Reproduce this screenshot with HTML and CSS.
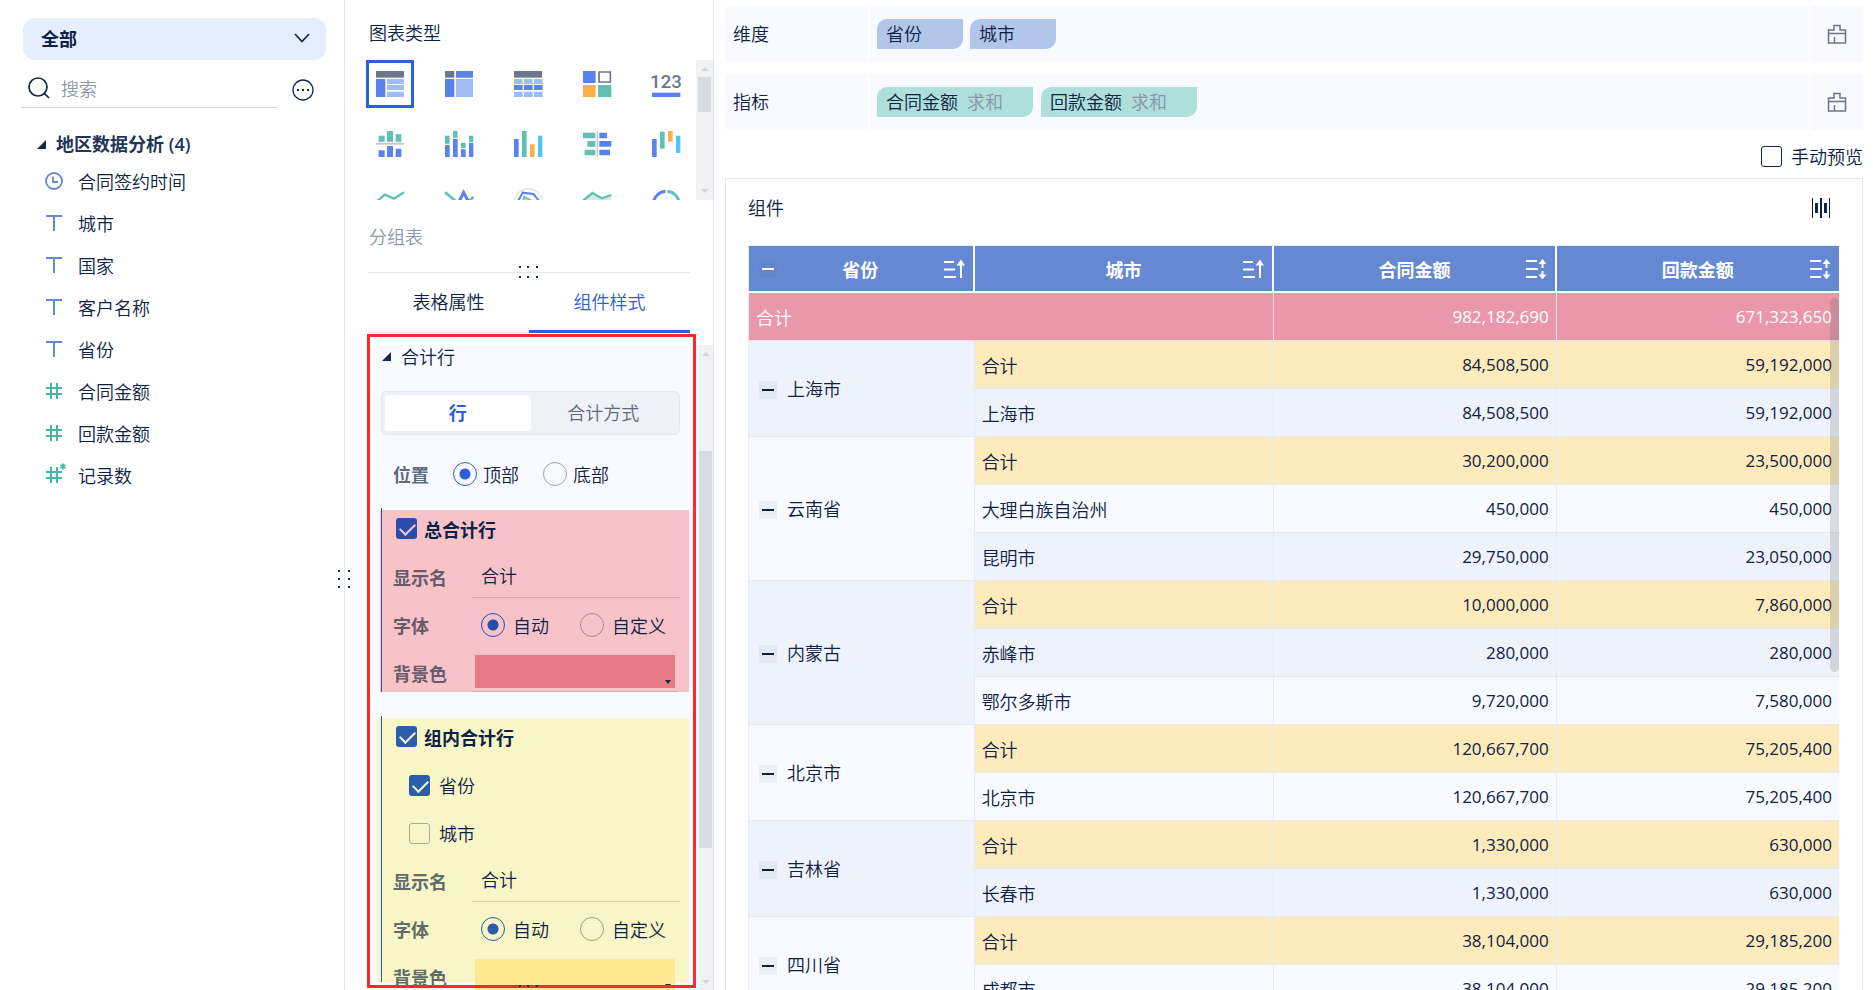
FILE: index.html
```
<!DOCTYPE html>
<html lang="zh-CN">
<head>
    <meta charset="UTF-8">
    <meta name="viewport" content="width=device-width, initial-scale=1.0">
    <title>组件</title>
    <link rel="stylesheet" href="styles.css">
</head>
<body>
    <!-- shared icons -->
    <svg class="sprite" aria-hidden="true">
        <symbol id="i-text" viewBox="0 0 18 18"><path d="M1 2H17M9 2V17" fill="none" stroke="#6488d2" stroke-width="2"/></symbol>
        <symbol id="i-num" viewBox="0 0 18 18"><path d="M1 6H17M1 12H17M6 1V17M12 1V17" fill="none" stroke="#43b8aa" stroke-width="2"/></symbol>
        <symbol id="i-brush" viewBox="0 0 20 20"><path d="M1.500 19V6H7V1.500H13V6H18.500V19ZM1.500 9.500H18.500M7.500 13V19" fill="none" stroke="#6b768c" stroke-width="1.500"/></symbol>
        <symbol id="i-asc" viewBox="0 0 21 20"><path d="M0 3H10M0 10.500H11M0 18H12M17 19V4" fill="none" stroke="#fff" stroke-width="2"/><path d="M12.500 6.500L17 0.500L21 6.500Z" fill="#fff"/></symbol>
        <symbol id="i-sort" viewBox="0 0 21 20"><path d="M0 2H11M0 10H12M0 18H11M16.500 4V9M16.500 12V17" fill="none" stroke="#fff" stroke-width="2"/><path d="M12.500 5L16.500 0L20.500 5ZM12.500 15.500L16.500 20.500L20.500 15.500Z" fill="#fff"/></symbol>
    </svg>

    <div class="app">
        <aside class="sidebar">
            <div class="dataset">
                <select aria-label="数据集"><option>全部</option></select>
                <svg width="16" height="10" viewBox="0 0 16 10"><path d="M1 1L8 8.500L15 1" fill="none" stroke="#13284b" stroke-width="1.800"/></svg>
            </div>
            <div class="search-row">
                <label class="search">
                    <svg width="22" height="22" viewBox="0 0 22 22"><circle cx="10" cy="10" r="9" fill="none" stroke="#13284b" stroke-width="1.700"/><path d="M16 16L21 21" stroke="#13284b" stroke-width="1.700"/></svg>
                    <input type="text" placeholder="搜索" aria-label="搜索">
                </label>
                <button type="button" class="icon-btn" aria-label="更多">
                    <svg width="22" height="22" viewBox="0 0 22 22"><circle cx="11" cy="11" r="10" fill="none" stroke="#13284b" stroke-width="1.300"/><path d="M5 10h2v2H5zM10 10h2v2h-2zM15 10h2v2h-2z" fill="#13284b"/></svg>
                </button>
            </div>
            <h2 class="group-title"><i class="tri"></i>地区数据分析 (4)</h2>
            <ul class="fields">
                <li><svg width="18" height="18" viewBox="0 0 18 18"><circle cx="9" cy="9" r="8" fill="none" stroke="#6488d2" stroke-width="1.800"/><path d="M8 4.500V10H13" fill="none" stroke="#6488d2" stroke-width="1.800"/></svg>合同签约时间</li>
                <li><svg width="18" height="18"><use href="#i-text"/></svg>城市</li>
                <li><svg width="18" height="18"><use href="#i-text"/></svg>国家</li>
                <li><svg width="18" height="18"><use href="#i-text"/></svg>客户名称</li>
                <li><svg width="18" height="18"><use href="#i-text"/></svg>省份</li>
                <li><svg width="18" height="18"><use href="#i-num"/></svg>合同金额</li>
                <li><svg width="18" height="18"><use href="#i-num"/></svg>回款金额</li>
                <li><svg class="over" width="18" height="18" viewBox="0 0 18 18"><path d="M1 6H17M1 12H17M6 1V17M12 1V17" fill="none" stroke="#43b8aa" stroke-width="2"/><path d="M14 -3h8v7h-8z" fill="#fff"/><path d="M18 -2.500V3.500M15.400 -1L20.600 2M15.400 2L20.600 -1" stroke="#43b8aa" stroke-width="1.700"/></svg>记录数</li>
            </ul>
            <svg class="grip-v" width="14" height="20" viewBox="0 0 14 20" aria-hidden="true"><path d="M0 0h2v2H0zM10 0h2v2h-2zM0 8h2v2H0zM10 8h2v2h-2zM0 16h2v2H0zM10 16h2v2h-2z" fill="#13284b"/></svg>
        </aside>

        <section class="config">
            <h2 class="config-title">图表类型</h2>
            <div class="chart-area">
                <div class="charts">
                    <button type="button" class="chart active" aria-label="分组表"><svg viewBox="0 0 84 78"><path d="M0 0h84v20H0z" fill="#6b768f"/><path d="M0 24h28v54H0z" fill="#5b82ec"/><path d="M33 24h51v15H33zM33 42h51v15H33zM33 62h51v16H33z" fill="#9fbcf4"/></svg></button>
                    <button type="button" class="chart" aria-label="交叉表"><svg viewBox="0 0 84 78"><path d="M0 0h28v20H0z" fill="#6b768f"/><path d="M33 0h51v20H33zM0 24h28v54H0z" fill="#5b82ec"/><path d="M33 24h51v54H33z" fill="#9fbcf4"/></svg></button>
                    <button type="button" class="chart" aria-label="明细表"><svg viewBox="0 0 84 78"><path d="M0 0h84v20H0z" fill="#6b768f"/><path d="M0 24h26v15H0zM30 24h26v15H30zM60 24h26v15H60zM0 62h26v16H0zM30 62h26v16H30zM60 62h26v16H60z" fill="#9fbcf4"/><path d="M0 42h26v15H0zM30 42h26v15H30zM60 42h26v15H60z" fill="#5b82ec"/></svg></button>
                    <button type="button" class="chart" aria-label="颜色表格"><svg viewBox="0 0 84 78"><path d="M0 0h38v36H0z" fill="#5b82ec"/><path d="M48 3h34v30H48z" fill="none" stroke="#6b768f" stroke-width="5"/><path d="M0 42h38v36H0z" fill="#fcb04a"/><path d="M45 42h40v36H45z" fill="#62bfb3"/></svg></button>
                    <button type="button" class="chart" aria-label="KPI指标卡"><svg viewBox="0 0 84 78"><text x="42" y="50" text-anchor="middle" font-family="Roboto" font-size="56" font-weight="500" fill="#6b768f">123</text><path d="M0 65h85v13H0z" fill="#5b82ec"/></svg></button>

                    <button type="button" class="chart" aria-label="对比柱状图"><svg viewBox="0 0 84 78"><path d="M8 14h18v18H8zM33 0h18v32H33zM59 10h17v22H59z" fill="#62bfb3"/><path d="M0 35h84v6H0z" fill="#c3c7ce"/><path d="M8 58h18v20H8zM33 45h18v33H33zM59 53h17v25H59z" fill="#5b82ec"/></svg></button>
                    <button type="button" class="chart" aria-label="堆积柱状图"><svg viewBox="0 0 84 78"><path d="M0 14h14v24H0zM24 0h14v20H24zM48 35h14v16H48zM72 14h13v20H72z" fill="#62bfb3"/><path d="M0 42h14v36H0zM24 24h14v54H24zM48 55h14v23H48zM72 36h13v42H72z" fill="#5b82ec"/></svg></button>
                    <button type="button" class="chart" aria-label="分区柱状图"><svg viewBox="0 0 84 78"><path d="M0 24h14v54H0z" fill="#5b82ec"/><path d="M24 0h14v78H24z" fill="#62bfb3"/><path d="M48 40h14v38H48z" fill="#fcb04a"/><path d="M72 14h13v64H72z" fill="#4fc6f7"/></svg></button>
                    <button type="button" class="chart" aria-label="对比条形图"><svg viewBox="0 0 84 78"><path d="M0 5h37v17H0zM13 30h24v17H13zM5 56h32v17H5z" fill="#62bfb3"/><path d="M41 0h4v78h-4z" fill="#c3c7ce"/><path d="M49 5h23v17H49zM49 30h36v17H49zM49 56h32v17H49z" fill="#5b82ec"/></svg></button>
                    <button type="button" class="chart" aria-label="瀑布图"><svg viewBox="0 0 84 78"><path d="M0 24h14v54H0z" fill="#5b82ec"/><path d="M24 2h14v51H24z" fill="#62bfb3"/><path d="M48 0h14v32H48z" fill="#fcb04a"/><path d="M72 14h13v52H72z" fill="#4fc6f7"/></svg></button>

                    <button type="button" class="chart" aria-label="折线图"><svg viewBox="0 0 84 78"><path d="M3 31L26 11L54 23L84 4" fill="none" stroke="#62bfb3" stroke-width="7"/></svg></button>
                    <button type="button" class="chart" aria-label="范围面积图"><svg viewBox="0 0 84 78"><path d="M0 4L34 32M68 32L86 18" fill="none" stroke="#62bfb3" stroke-width="8"/><path d="M42 32L56 4L70 32" fill="none" stroke="#5b82ec" stroke-width="9"/></svg></button>
                    <button type="button" class="chart" aria-label="雷达图"><svg viewBox="0 0 84 78"><circle cx="43" cy="38" r="44" fill="none" stroke="#dfe2e8" stroke-width="4"/><path d="M10 34L26 5L58 9L79 34" fill="none" stroke="#5b82ec" stroke-width="6"/><path d="M26 34L30 17L54 30" fill="#b5ddd9" stroke="#62bfb3" stroke-width="5"/></svg></button>
                    <button type="button" class="chart" aria-label="面积图"><svg viewBox="0 0 84 78"><path d="M0 30L28 5L56 22L85 12V40H0Z" fill="#d4ece9"/><path d="M0 29L28 6L56 22L85 12" fill="none" stroke="#62bfb3" stroke-width="7"/></svg></button>
                    <button type="button" class="chart" aria-label="饼图"><svg viewBox="0 0 84 78"><circle cx="43" cy="40" r="38" fill="#f6f7f9"/><path d="M4 36A40 40 0 0 1 40 1" fill="none" stroke="#5b82ec" stroke-width="9"/><path d="M46 1A40 40 0 0 1 82 36" fill="none" stroke="#62bfb3" stroke-width="9"/></svg></button>
                </div>
                <div class="scrollbar chart-scroll"><i class="arrow up"></i><span class="thumb"></span><i class="arrow down"></i></div>
            </div>
            <p class="chart-name">分组表</p>
            <div class="divider">
                <svg class="grip-h" width="20" height="12" viewBox="0 0 20 12" aria-hidden="true"><path d="M0 0h2v2H0zM8 0h2v2H8zM17 0h2v2h-2zM0 10h2v2H0zM8 10h2v2H8zM17 10h2v2h-2z" fill="#13284b"/></svg>
            </div>
            <nav class="tabs">
                <button type="button">表格属性</button>
                <button type="button" class="active">组件样式</button>
            </nav>

            <div class="style-area">
                <form class="style-form">
                    <h3 class="section-title"><i class="tri"></i>合计行</h3>
                    <div class="segment">
                        <button type="button" class="active">行</button>
                        <button type="button">合计方式</button>
                    </div>
                    <div class="row position">
                        <span class="name">位置</span>
                        <label class="opt"><input type="radio" name="pos" checked>顶部</label>
                        <label class="opt"><input type="radio" name="pos">底部</label>
                    </div>

                    <div class="block block-total">
                        <label class="row check strong"><input type="checkbox" checked>总合计行</label>
                        <div class="row">
                            <label class="name" for="totalName">显示名</label>
                            <input type="text" id="totalName" value="合计">
                        </div>
                        <div class="row">
                            <span class="name">字体</span>
                            <label class="opt"><input type="radio" name="font1" checked>自动</label>
                            <label class="opt"><input type="radio" name="font1">自定义</label>
                        </div>
                        <div class="row">
                            <span class="name">背景色</span>
                            <div class="color-box"><button type="button" class="color" aria-label="背景色"></button></div>
                        </div>
                    </div>

                    <div class="block block-group">
                        <label class="row check strong"><input type="checkbox" checked>组内合计行</label>
                        <label class="row check sub"><input type="checkbox" checked>省份</label>
                        <label class="row check sub"><input type="checkbox">城市</label>
                        <div class="row">
                            <label class="name" for="groupName">显示名</label>
                            <input type="text" id="groupName" value="合计">
                        </div>
                        <div class="row">
                            <span class="name">字体</span>
                            <label class="opt"><input type="radio" name="font2" checked>自动</label>
                            <label class="opt"><input type="radio" name="font2">自定义</label>
                        </div>
                        <div class="row">
                            <span class="name">背景色</span>
                            <div class="color-box"><button type="button" class="color" aria-label="背景色"></button></div>
                        </div>
                    </div>
                </form>
                <div class="scrollbar style-scroll"><i class="arrow up"></i><span class="thumb"></span><i class="arrow down"></i></div>
                <div class="highlight"></div>
                <svg class="grip-bottom" width="20" height="12" viewBox="0 0 20 12" aria-hidden="true"><path d="M0 0h2v2H0zM8 0h2v2H8zM17 0h2v2h-2z" fill="#13284b"/></svg>
            </div>
        </section>

        <main class="main">
            <div class="shelf">
                <div class="shelf-name">维度</div>
                <div class="shelf-items dims">
                    <span class="chip">省份</span>
                    <span class="chip">城市</span>
                </div>
                <button type="button" class="shelf-clear" aria-label="清空维度"><svg width="20" height="20"><use href="#i-brush"/></svg></button>
            </div>
            <div class="shelf">
                <div class="shelf-name">指标</div>
                <div class="shelf-items measures">
                    <span class="chip">合同金额 <em>求和</em></span>
                    <span class="chip">回款金额 <em>求和</em></span>
                </div>
                <button type="button" class="shelf-clear" aria-label="清空指标"><svg width="20" height="20"><use href="#i-brush"/></svg></button>
            </div>
            <label class="preview"><input type="checkbox">手动预览</label>

            <div class="card">
                <div class="card-head">
                    <h2>组件</h2>
                    <button type="button" class="icon-btn" aria-label="列宽">
                        <svg width="20" height="20" viewBox="0 0 20 20"><path d="M1 0h1v20H1zM4 5h3v10H4zM9 0h2v20H9zM13 5h3v10h-3zM18 0h1v20h-1z" fill="#0f2446"/></svg>
                    </button>
                </div>
                <div class="table-wrap">
                    <table>
                        <colgroup><col class="c-prov"><col class="c-city"><col><col></colgroup>
                        <thead>
                            <tr>
                                <th><div class="th"><button type="button" class="fold" aria-label="收起"></button><span>省份</span><svg width="21" height="20"><use href="#i-asc"/></svg></div></th>
                                <th><div class="th"><span>城市</span><svg width="21" height="20"><use href="#i-asc"/></svg></div></th>
                                <th><div class="th"><span>合同金额</span><svg width="21" height="20"><use href="#i-sort"/></svg></div></th>
                                <th><div class="th"><span>回款金额</span><svg width="21" height="20"><use href="#i-sort"/></svg></div></th>
                            </tr>
                        </thead>
                        <tbody>
                            <tr class="total"><td colspan="2">合计</td><td class="num">982,182,690</td><td class="num">671,323,650</td></tr>
                            <tr class="sub"><td class="prov odd" rowspan="2"><button type="button" class="fold" aria-label="收起"></button>上海市</td><td>合计</td><td class="num">84,508,500</td><td class="num">59,192,000</td></tr>
                            <tr class="odd"><td>上海市</td><td class="num">84,508,500</td><td class="num">59,192,000</td></tr>
                            <tr class="sub"><td class="prov" rowspan="3"><button type="button" class="fold" aria-label="收起"></button>云南省</td><td>合计</td><td class="num">30,200,000</td><td class="num">23,500,000</td></tr>
                            <tr><td>大理白族自治州</td><td class="num">450,000</td><td class="num">450,000</td></tr>
                            <tr class="odd"><td>昆明市</td><td class="num">29,750,000</td><td class="num">23,050,000</td></tr>
                            <tr class="sub"><td class="prov odd" rowspan="3"><button type="button" class="fold" aria-label="收起"></button>内蒙古</td><td>合计</td><td class="num">10,000,000</td><td class="num">7,860,000</td></tr>
                            <tr class="odd"><td>赤峰市</td><td class="num">280,000</td><td class="num">280,000</td></tr>
                            <tr><td>鄂尔多斯市</td><td class="num">9,720,000</td><td class="num">7,580,000</td></tr>
                            <tr class="sub"><td class="prov" rowspan="2"><button type="button" class="fold" aria-label="收起"></button>北京市</td><td>合计</td><td class="num">120,667,700</td><td class="num">75,205,400</td></tr>
                            <tr><td>北京市</td><td class="num">120,667,700</td><td class="num">75,205,400</td></tr>
                            <tr class="sub"><td class="prov odd" rowspan="2"><button type="button" class="fold" aria-label="收起"></button>吉林省</td><td>合计</td><td class="num">1,330,000</td><td class="num">630,000</td></tr>
                            <tr class="odd"><td>长春市</td><td class="num">1,330,000</td><td class="num">630,000</td></tr>
                            <tr class="sub"><td class="prov" rowspan="2"><button type="button" class="fold" aria-label="收起"></button>四川省</td><td>合计</td><td class="num">38,104,000</td><td class="num">29,185,200</td></tr>
                            <tr><td>成都市</td><td class="num">38,104,000</td><td class="num">29,185,200</td></tr>
                        </tbody>
                    </table>
                    <div class="table-thumb"></div>
                </div>
            </div>
        </main>
    </div>
</body>
</html>
```
FILE: styles.css
```
* {
    margin: 0;
    padding: 0;
    box-sizing: border-box;
}

body {
    font-family: "Noto Sans CJK SC", sans-serif;
    font-size: 18px;
    line-height: 24px;
    font-weight: 350;
    color: #0d2145;
    background: #fff;
    overflow: hidden;
}

button, input, select {
    font: inherit;
    color: inherit;
    border: none;
    background: none;
    outline: none;
}

button {
    cursor: pointer;
}

h2, h3 {
    font-size: 18px;
    font-weight: 350;
}

svg {
    display: block;
    flex-shrink: 0;
}

.sprite {
    position: absolute;
    width: 0;
    height: 0;
}

.app {
    display: flex;
    height: 100vh;
}

.tri {
    border-left: 9px solid transparent;
    border-bottom: 9px solid #13284b;
}

/* Radio and checkbox */
input[type="radio"] {
    appearance: none;
    flex-shrink: 0;
    width: 24px;
    height: 24px;
    border: 1px solid #9aa3b3;
    border-radius: 50%;
}

input[type="radio"]:checked {
    border-color: var(--accent, #2c60db);
    background: radial-gradient(circle, var(--accent, #2c60db) 5px, transparent 6px);
}

input[type="checkbox"] {
    appearance: none;
    flex-shrink: 0;
    width: 21px;
    height: 21px;
    border: 1px solid #13284b;
    border-radius: 3px;
    position: relative;
}

input[type="checkbox"]:checked {
    border: none;
    background: var(--accent);
}

input[type="checkbox"]:checked::after {
    content: "";
    position: absolute;
    left: 7px;
    top: 2px;
    width: 7px;
    height: 13px;
    border: solid var(--tick);
    border-width: 0 2px 2px 0;
    transform: rotate(45deg);
}

/* Sidebar */
.sidebar {
    position: relative;
    width: 345px;
    flex-shrink: 0;
    padding: 18px 18px 0 21px;
    border-right: 1px solid #e4e7f0;
}

.dataset {
    display: flex;
    align-items: center;
    height: 42px;
    margin-left: 2px;
    padding: 0 16px 2px 18px;
    border-radius: 12px;
    background: #e5eeff;
}

.dataset select {
    appearance: none;
    flex: 1;
    font-weight: 700;
}

.search-row {
    display: flex;
    justify-content: space-between;
    align-items: center;
    height: 48px;
    padding-right: 12px;
}

.search {
    display: flex;
    align-items: center;
    gap: 11px;
    width: 256px;
    height: 100%;
    padding: 9px 0 0 7px;
    border-bottom: 1px solid #d4d8e2;
}

.search input {
    width: 100%;
}

.search input::placeholder {
    color: #8e97a8;
}

.search-row .icon-btn {
    padding-top: 12px;
}

.group-title {
    display: flex;
    align-items: center;
    gap: 10px;
    height: 30px;
    margin-top: 21px;
    padding-left: 16px;
    font-family: "Open Sans", "Noto Sans CJK SC", sans-serif;
    font-weight: 600;
    color: #223556;
}

.fields {
    margin-top: 1px;
    list-style: none;
}

.fields li {
    display: flex;
    align-items: center;
    gap: 15px;
    height: 42px;
    padding-left: 24px;
}

.over {
    overflow: visible;
}

.grip-v {
    position: absolute;
    right: -8px;
    top: 570px;
}

/* Config panel */
.config {
    display: flex;
    flex-direction: column;
    width: 369px;
    flex-shrink: 0;
    padding-left: 21px;
    border-right: 1px solid #e4e7f0;
}

.config-title {
    padding: 20px 3px 16px;
}

.chart-area {
    display: flex;
    justify-content: space-between;
    height: 140px;
    overflow: hidden;
}

.charts {
    display: grid;
    grid-template-columns: repeat(5, 48px);
    grid-auto-rows: 48px;
    gap: 12px 21px;
}

.chart {
    display: flex;
    align-items: center;
    justify-content: center;
}

.chart.active {
    border: 3px solid #2c60db;
}

.chart svg {
    width: 28px;
    height: 26px;
    overflow: visible;
}

.scrollbar {
    display: flex;
    flex-direction: column;
    align-items: center;
    background: #f1f2f4;
}

.scrollbar .thumb {
    width: 13px;
    background: #d8dbe0;
}

.arrow {
    border: 4px solid transparent;
}

.arrow.up {
    border-top: none;
    border-bottom-color: #d3d6dc;
}

.arrow.down {
    border-bottom: none;
    border-top-color: #d3d6dc;
    margin-top: auto;
}

.chart-scroll {
    width: 17px;
    padding: 7px 0;
}

.chart-scroll .thumb {
    height: 35px;
    margin-top: 6px;
}

.chart-name {
    padding: 24px 3px;
    color: #8e97a8;
}

.divider {
    position: relative;
    margin: 0 23px 0 2px;
    border-top: 1px solid #e4e7f0;
}

.grip-h {
    position: absolute;
    left: 151px;
    top: -7px;
}

.tabs {
    display: flex;
    height: 60px;
    margin: 0 23px 0 2px;
    border-bottom: 1px solid #e4e7f0;
}

.tabs button {
    flex: 1;
    margin-bottom: -1px;
    padding-bottom: 1px;
    border-bottom: 3px solid transparent;
}

.tabs .active {
    color: #2c60db;
    border-color: #2c60db;
}

.style-area {
    position: relative;
    display: flex;
    flex: 1;
    min-height: 0;
    margin-top: 12px;
    margin-left: 1px;
}

.style-form {
    flex: 1;
    overflow: hidden;
    background: #f8faff;
}

.section-title {
    display: flex;
    align-items: center;
    gap: 10px;
    height: 22px;
    padding-left: 15px;
    line-height: 22px;
}

.segment {
    display: flex;
    height: 44px;
    margin: 24px 18px 0 14px;
    padding: 3px;
    border: 1px solid #e4e7ee;
    border-radius: 6px;
    background: #eef1f6;
}

.segment button {
    flex: 1;
    padding-bottom: 2px;
    color: #5d6a82;
}

.segment .active {
    border-radius: 4px;
    background: #fff;
    color: #2c60db;
    font-weight: 700;
}

.row {
    display: flex;
    align-items: center;
    height: 48px;
}

.name {
    width: 79px;
    font-weight: 600;
    color: var(--label, #5d6a82);
}

.opt {
    display: flex;
    align-items: center;
    gap: 8px;
    white-space: nowrap;
}

.position {
    margin-top: 15px;
    padding-left: 26px;
}

.position .name {
    width: 60px;
}

.position .opt {
    gap: 6px;
    margin-right: 24px;
}

.block {
    position: relative;
    height: 182px;
    margin: 12px 9px 26px 13px;
    padding: 0 9px 0 13px;
}

.block::before {
    content: "";
    position: absolute;
    left: 1px;
    top: -2px;
    bottom: 0;
    border-left: 1px solid var(--accent);
}

.block-total {
    --accent: #2a4cad;
    --tick: #f9c6cb;
    --label: #665a6c;
    --line: #d5a9b2;
    background: #f8c3c8;
}

.block-group {
    --accent: #2b5dab;
    --tick: #f8f5c8;
    --label: #5f6c69;
    --line: #d3d2ae;
    height: 264px;
    margin: 0 9px 0 10px;
    padding-left: 16px;
    background: #f8f5c6;
}

.block-group::before {
    left: 4px;
}

.check {
    gap: 8px;
    padding-left: 3px;
}

.block .strong {
    height: 43px;
    padding-bottom: 6px;
    gap: 7px;
    font-weight: 600;
}

.block .sub {
    padding-left: 16px;
    gap: 9px;
}

.block .sub input:not(:checked) {
    border-color: #a9ab93;
}

.block input[type="text"] {
    flex: 1;
    min-width: 0;
    align-self: stretch;
    margin-bottom: 3px;
    padding-left: 9px;
    border-bottom: 1px solid var(--line);
}

.block .opt {
    margin-right: 22px;
}

.block .opt:last-child {
    margin-right: 0;
}

.block .opt input {
    margin-left: 9px;
}

.block input[type="radio"]:not(:checked) {
    border-color: rgba(80, 80, 90, 0.5);
}

.color-box {
    flex: 1;
    margin-right: 2px;
    padding: 0 3px 3px;
    border-bottom: 1px solid var(--line);
}

.color {
    display: block;
    position: relative;
    width: 100%;
    height: 33px;
    background: #e87883;
}

.color::after {
    content: "";
    position: absolute;
    right: 4px;
    bottom: 4px;
    border: 3px solid transparent;
    border-top: 4px solid #13284b;
    border-bottom: none;
}

.block-group .color {
    background: #ffe990;
}

.style-scroll {
    width: 15px;
    padding: 7px 0 6px;
}

.style-scroll .thumb {
    height: 397px;
    margin-top: 95px;
}

.highlight {
    position: absolute;
    left: 0;
    right: 17px;
    top: -11px;
    bottom: 2px;
    border: 3px solid #ff262c;
}

.grip-bottom {
    position: absolute;
    left: 152px;
    bottom: -7px;
}

/* Main area */
.main {
    display: flex;
    flex: 1;
    flex-direction: column;
    min-width: 0;
    padding: 6px 10px 0 11px;
}

.shelf {
    display: flex;
    gap: 3px;
    height: 56px;
    margin-bottom: 12px;
    flex-shrink: 0;
}

.shelf-name, .shelf-items, .shelf-clear {
    display: flex;
    align-items: center;
    background: #f8faff;
}

.shelf-name {
    width: 142px;
    padding: 0 0 2px 8px;
}

.shelf-items {
    flex: 1;
    gap: 8px;
    padding: 0 7px;
}

.dims {
    gap: 7px;
}

.shelf-clear {
    width: 52px;
    justify-content: center;
}

.chip {
    height: 30px;
    padding-left: 9px;
    line-height: 28px;
    border-radius: 10px 0 10px 0;
}

.dims .chip {
    width: 86px;
    background: #b1c6e9;
}

.measures .chip {
    width: 156px;
    background: #afdfda;
}

.chip em {
    margin-left: 5px;
    font-style: normal;
    color: #8b93a8;
}

.preview {
    display: flex;
    align-items: center;
    align-self: flex-end;
    gap: 9px;
    margin-top: 2px;
}

.card {
    flex: 1;
    min-height: 0;
    margin-top: 10px;
    padding: 0 23px 0 22px;
    border: 1px solid #e4e7f0;
    border-bottom: none;
    overflow: hidden;
}

.card-head {
    display: flex;
    align-items: center;
    justify-content: space-between;
    height: 66px;
    padding: 0 8px 8px 0;
}

.card-head h2 {
    padding-bottom: 2px;
}

.table-wrap {
    position: relative;
}

table {
    width: 100%;
    table-layout: fixed;
    border-collapse: separate;
    border-spacing: 0;
    border-left: 1px solid #e6ecf8;
    border-top: 1px solid #e6ecf8;
}

.c-prov {
    width: 20.7%;
}

.c-city {
    width: 27.5%;
}

th {
    height: 47px;
    padding: 0 8px;
    border-right: 2px solid #fff;
    border-bottom: 2px solid #fff;
    background: #6488d2;
    color: #fff;
    font-weight: 700;
}

th:last-child, td:last-child {
    border-right: none;
}

.th {
    display: flex;
    align-items: center;
}

.th span {
    flex: 1;
    padding-left: 21px;
}

.th .fold + span {
    padding-left: 0;
}

td {
    height: 48px;
    padding: 0 7px;
    border-right: 1px solid #e3ebf8;
    border-bottom: 1px solid #e3ebf8;
    background: #f8faff;
}

.odd td, td.odd {
    background: #eef3fb;
}

.sub td:not(.prov) {
    background: #feebbb;
}

.total td {
    background: #e997a9;
    border-color: #f5dfe7;
    color: #fff;
}

.num {
    font-family: "Open Sans", sans-serif;
    font-size: 17px;
    font-weight: 400;
    text-align: right;
}

.fold {
    display: inline-flex;
    align-items: center;
    justify-content: center;
    width: 18px;
    height: 18px;
    background: rgba(90, 100, 110, 0.07);
    vertical-align: middle;
}

.fold::before {
    content: "";
    width: 12px;
    border-top: 2px solid currentColor;
}

.th .fold {
    margin-left: 2px;
}

.prov .fold {
    margin: 0 10px 2px 3px;
}

.table-thumb {
    position: absolute;
    right: 0;
    top: 53px;
    width: 9px;
    height: 374px;
    border-radius: 5px;
    background: rgba(80, 85, 100, 0.18);
}
```
